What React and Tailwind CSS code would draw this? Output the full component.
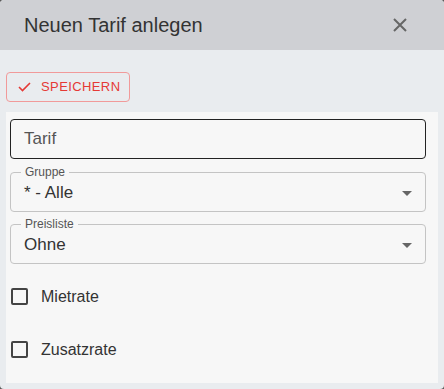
import { useState } from "react";

function SelectField({ label, value }) {
  return (
    <div className="relative h-[40px] w-full rounded border border-[#c4c4c4]">
      <span className="absolute -top-[8px] left-[10px] bg-[#f7f7f7] px-[4px] text-[12px] leading-[14px] text-[#555]">
        {label}
      </span>
      <div className="flex h-full items-center justify-between pl-[13px] pr-[13px] pt-[2px]">
        <span className="text-[17px] text-[#333]">{value}</span>
        <svg width="10" height="5" viewBox="0 0 10 5">
          <path d="M0 0 L10 0 L5 5 Z" fill="#666" />
        </svg>
      </div>
    </div>
  );
}

function CheckRow({ label, checked, onChange }) {
  return (
    <label className="flex h-[53px] items-center pl-[1px]">
      <span
        onClick={onChange}
        className="flex h-[17px] w-[17px] items-center justify-center rounded-[2px] border-2 border-[#444]"
      >
        {checked && <span className="h-[7px] w-[7px] bg-[#444]" />}
      </span>
      <span className="ml-[13px] text-[16px] text-[#333]">{label}</span>
    </label>
  );
}

export default function App() {
  const [miete, setMiete] = useState(false);
  const [zusatz, setZusatz] = useState(false);

  return (
    <div className="h-[389px] w-[444px] bg-[#5a5a5a]" style={{ fontFamily: "'Liberation Sans', Arial, sans-serif" }}>
      <div className="flex h-full flex-col overflow-hidden rounded-[4px] bg-[#e9ecef]">
        <div className="flex h-[50px] shrink-0 items-center justify-between bg-[#cfd0d4] pl-[24px] pr-[37px]">
          <h2 className="text-[20px] text-[#333]">Neuen Tarif anlegen</h2>
          <svg width="14" height="14" viewBox="0 0 14 14">
            <path d="M1 1 L13 13 M13 1 L1 13" stroke="#666" strokeWidth="2" />
          </svg>
        </div>

        <div className="px-[6px] pt-[22px]">
          <button className="flex h-[30px] items-center gap-[10px] rounded border border-[#f19a9a] pl-[11px] pr-[9px] text-[13px] tracking-[0.4px] text-[#e53935]">
            <svg width="13" height="10" viewBox="0 0 13 10">
              <path d="M1 5 L4.5 8.5 L12 1" stroke="#e53935" strokeWidth="1.6" fill="none" />
            </svg>
            SPEICHERN
          </button>
        </div>

        <div className="mx-[6px] mt-[10px] flex-1 bg-[#f7f7f7] pl-[4px] pr-[12px] pt-[7px]">
          <div className="flex h-[40px] items-center rounded border border-[#222] pl-[13px]">
            <span className="text-[17px] text-[#555]">Tarif</span>
          </div>
          <div className="mt-[13px]">
            <SelectField label="Gruppe" value="* - Alle" />
          </div>
          <div className="mt-[12px]">
            <SelectField label="Preisliste" value="Ohne" />
          </div>
          <div className="mt-[6px]">
            <CheckRow label="Mietrate" checked={miete} onChange={() => setMiete(!miete)} />
            <CheckRow label="Zusatzrate" checked={zusatz} onChange={() => setZusatz(!zusatz)} />
          </div>
        </div>
        <div className="h-[6px] shrink-0" />
      </div>
    </div>
  );
}
